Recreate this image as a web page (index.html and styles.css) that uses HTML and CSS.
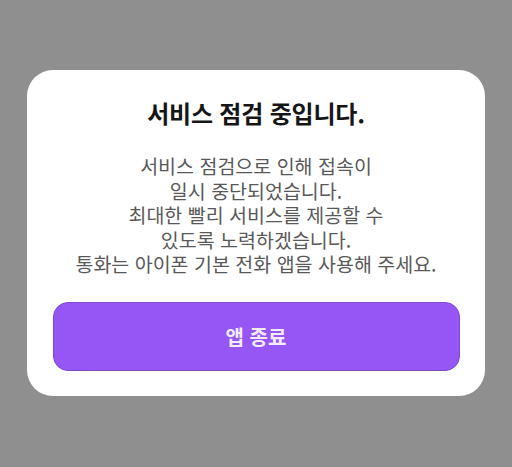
FILE: index.html
```html
<!DOCTYPE html>
<html lang="ko">
<head>
<meta charset="utf-8">
<link rel="stylesheet" href="styles.css">
</head>
<body>
<div class="screen">
  <div class="dialog">
    <h1 class="title">서비스 점검 중입니다.</h1>
    <p class="message">서비스 점검으로 인해 접속이<br>일시 중단되었습니다.<br>최대한 빨리 서비스를 제공할 수<br>있도록 노력하겠습니다.<br>통화는 아이폰 기본 전화 앱을 사용해 주세요.</p>
    <button class="btn">앱 종료</button>
  </div>
</div>
</body>
</html>
```

FILE: styles.css
```css
html, body {
  margin: 0;
  padding: 0;
}
body {
  width: 512px;
  height: 467px;
  background: #8f8f8f;
  font-family: "Noto Sans CJK KR", "Noto Sans", sans-serif;
  overflow: hidden;
}
.screen {
  padding-top: 70px;
  padding-left: 27px;
}
.dialog {
  width: 458px;
  height: 326px;
  box-sizing: border-box;
  background: #ffffff;
  border-radius: 26px;
  padding: 26px 25px 0 25px;
  display: flex;
  flex-direction: column;
  align-items: center;
}
.title {
  margin: 0;
  font-size: 24px;
  font-weight: 700;
  color: #161616;
  line-height: 34px;
  letter-spacing: -0.2px;
}
.message {
  margin: 24px 0 0 0;
  font-size: 19.5px;
  font-weight: 400;
  color: #595959;
  line-height: 24.5px;
  text-align: center;
}
.btn {
  margin-top: 25px;
  width: 407px;
  height: 69px;
  flex-shrink: 0;
  border: 1px solid #7b4cc4;
  border-radius: 15px;
  background: #9656f5;
  color: #f3ecff;
  font-family: "Noto Sans CJK KR", "Noto Sans", sans-serif;
  font-size: 20px;
  font-weight: 700;
  cursor: pointer;
}
```
